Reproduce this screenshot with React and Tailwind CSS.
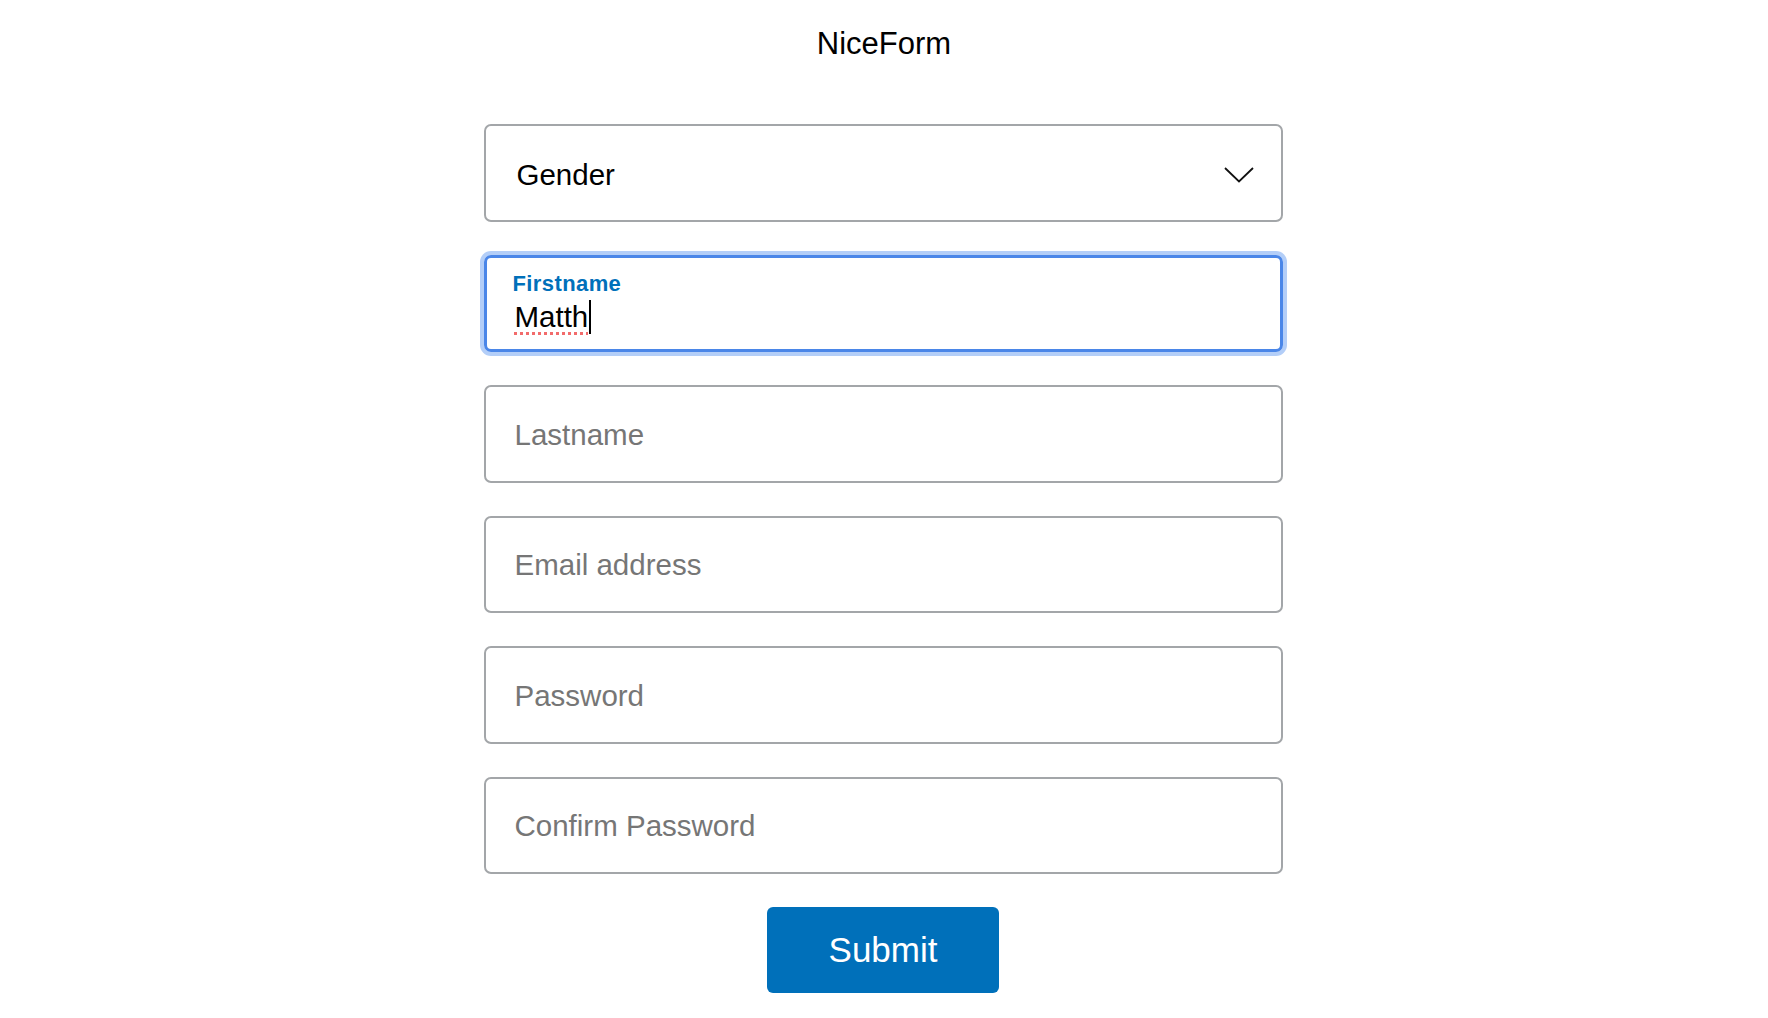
import { useState } from 'react';

const fieldClass =
  'w-full h-[97.5px] border-2 border-[#a3a6a9] rounded-[7px] pl-[29px] pr-[30px] pt-[2px] text-[29.5px] text-black bg-white outline-none placeholder:text-[#767676]';

export default function App() {
  const [form, setForm] = useState({
    lastname: '',
    email: '',
    password: '',
    confirm: '',
  });

  const handleChange = (e) => {
    setForm({ ...form, [e.target.name]: e.target.value });
  };

  return (
    <div className="min-h-screen bg-white font-['Liberation_Sans',Arial,sans-serif]">
      <h1 className="pt-[28px] text-center text-[31px] leading-[31px] text-black">NiceForm</h1>

      <div className="pr-[2px]">
        <form className="w-[799px] mx-auto mt-[65px] flex flex-col gap-[33px]" onSubmit={(e) => e.preventDefault()}>
          {/* gender select */}
          <div className="h-[97.5px] border-2 border-[#a3a6a9] rounded-[7px] pl-[31px] pr-[27px] pt-[4px] flex items-center justify-between">
            <span className="text-[29.5px] text-black">Gender</span>
            <svg width="30" height="16" viewBox="0 0 30 16" fill="none">
              <polyline points="1,1 15,14.5 29,1" stroke="#111" strokeWidth="1.8" />
            </svg>
          </div>

          {/* focused field */}
          <div className="h-[97.5px] border-[3px] border-[#4a86e8] rounded-[7px] ring-[4px] ring-[#b3cef8] pl-[26px] pt-[15px]">
            <div className="text-[22px] leading-[22px] font-bold tracking-[0.4px] text-[#0070ba]">Firstname</div>
            <div className="mt-[5px] ml-[2px] flex items-center text-[29.5px] leading-[30px] text-black">
              <span className="underline decoration-dotted decoration-[#f26b6b] decoration-[3px] underline-offset-[5px]">Matth</span>
              <span className="ml-[1px] w-[2px] h-[34px] bg-black" />
            </div>
          </div>

          <input name="lastname" placeholder="Lastname" value={form.lastname} onChange={handleChange} className={fieldClass} />
          <input name="email" placeholder="Email address" value={form.email} onChange={handleChange} className={fieldClass} />
          <input type="password" name="password" placeholder="Password" value={form.password} onChange={handleChange} className={fieldClass} />
          <input type="password" name="confirm" placeholder="Confirm Password" value={form.confirm} onChange={handleChange} className={fieldClass} />

          <button
            type="submit"
            className="mx-auto w-[232px] h-[86px] bg-[#0070ba] rounded-[6px] text-white text-[35px]"
          >
            Submit
          </button>
        </form>
      </div>
    </div>
  );
}
